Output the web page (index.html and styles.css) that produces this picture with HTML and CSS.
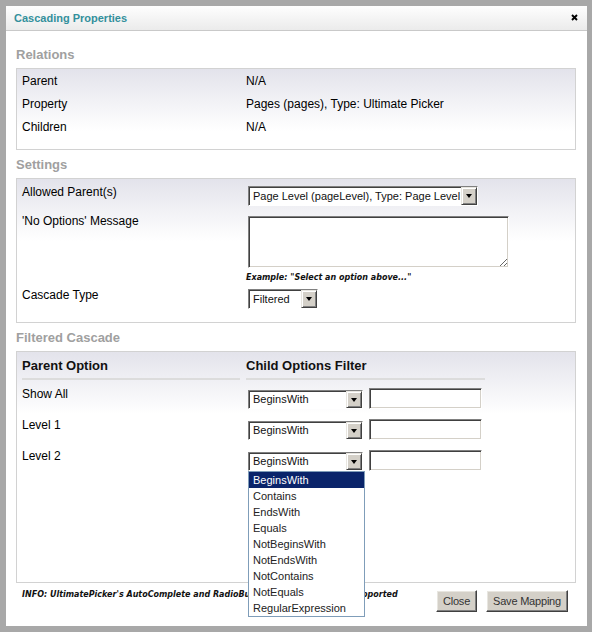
FILE: index.html
```html
<!DOCTYPE html>
<html>
<head>
<meta charset="utf-8">
<title>Cascading Properties</title>
<link rel="stylesheet" href="styles.css">
</head>
<body>
<div class="dialog">
  <div class="titlebar">
    <span class="title">Cascading Properties</span>
    <svg class="close" width="7" height="7" viewBox="0 0 7 7"><path d="M1 1 L6 6 M6 1 L1 6" stroke="#000" stroke-width="1.9" fill="none"/></svg>
  </div>
  <div class="content">
    <h2 class="heading first">Relations</h2>
    <div class="panel panel-rel">
      <div class="rel-row"><div>Parent</div><div>N/A</div></div>
      <div class="rel-row"><div>Property</div><div>Pages (pages), Type: Ultimate Picker</div></div>
      <div class="rel-row"><div>Children</div><div>N/A</div></div>
    </div>

    <h2 class="heading">Settings</h2>
    <div class="panel panel-set">
      <div class="set-row">
        <div class="lbl">Allowed Parent(s)</div>
        <div class="ctl">
          <div class="sel sel-parent"><span class="sel-text">Page Level (pageLevel), Type: Page Level</span><span class="sel-arrow"></span></div>
        </div>
      </div>
      <div class="set-row row-msg">
        <div class="lbl">'No Options' Message</div>
        <div class="ctl ctl-msg">
          <textarea class="ta"></textarea>
          <div class="hint">Example: "Select an option above..."</div>
        </div>
      </div>
      <div class="set-row row-type">
        <div class="lbl">Cascade Type</div>
        <div class="ctl">
          <div class="sel sel-type"><span class="sel-text">Filtered</span><span class="sel-arrow"></span></div>
        </div>
      </div>
    </div>

    <h2 class="heading">Filtered Cascade</h2>
    <div class="panel panel-filter">
      <div class="fhead">
        <div class="col-head col-left">Parent Option</div>
        <div class="col-head col-right">Child Options Filter</div>
      </div>
      <div class="frow first-row">
        <div class="lbl">Show All</div>
        <div class="fctl">
          <div class="sel-wrap"><div class="sel sel-filter"><span class="sel-text">BeginsWith</span><span class="sel-arrow"></span></div></div>
          <input class="txt" type="text">
        </div>
      </div>
      <div class="frow">
        <div class="lbl">Level 1</div>
        <div class="fctl">
          <div class="sel-wrap"><div class="sel sel-filter"><span class="sel-text">BeginsWith</span><span class="sel-arrow"></span></div></div>
          <input class="txt" type="text">
        </div>
      </div>
      <div class="frow">
        <div class="lbl">Level 2</div>
        <div class="fctl">
          <div class="sel-wrap">
            <div class="sel sel-filter"><span class="sel-text">BeginsWith</span><span class="sel-arrow"></span></div>
            <ul class="dropdown">
              <li class="active">BeginsWith</li>
              <li>Contains</li>
              <li>EndsWith</li>
              <li>Equals</li>
              <li>NotBeginsWith</li>
              <li>NotEndsWith</li>
              <li>NotContains</li>
              <li>NotEquals</li>
              <li>RegularExpression</li>
            </ul>
          </div>
          <input class="txt" type="text">
        </div>
      </div>
    </div>

    <div class="footer">
      <div class="info">INFO: UltimatePicker's AutoComplete and RadioButtonList types are not supported</div>
      <div class="buttons">
        <button class="btn btn-close">Close</button>
        <button class="btn btn-save">Save Mapping</button>
      </div>
    </div>
  </div>
</div>
</body>
</html>
```

FILE: styles.css
```css
html, body {
  margin: 0;
}
body {
  background: #a8a8a8;
  padding: 6px 5px 6px 6px;
  font-family: "Liberation Sans", Arial, sans-serif;
  color: #000;
}
.dialog {
  width: 581px;
  height: 620px;
  background: #fff;
  box-sizing: border-box;
}
.titlebar {
  height: 24px;
  border-bottom: 1px solid #c9c9c9;
  background: linear-gradient(#fefefe, #ebebeb);
  display: flex;
  align-items: center;
  justify-content: space-between;
  padding: 0 9px 0 8px;
}
.title {
  font-size: 11px;
  font-weight: bold;
  line-height: 24px;
  color: #33909c;
}
.close {
  display: block;
  margin-top: -1px;
}
.content {
  padding: 0 11px 0 10px;
}
.heading {
  margin: 6px 0;
  padding-top: 1px;
  height: 15px;
  font-size: 13px;
  line-height: 16px;
  font-weight: bold;
  color: #a0a0a0;
}
.heading.first {
  margin-top: 15px;
}
.panel {
  border: 1px solid #d2d2d2;
  background: linear-gradient(#e3e3eb, #fff 62px) no-repeat;
  background-color: #fff;
  padding: 0 5px;
  font-size: 12px;
}
.panel-rel {
  padding-top: 1px;
  padding-bottom: 10px;
}
.rel-row {
  display: grid;
  grid-template-columns: 224px 1fr;
  line-height: 23px;
}
.panel-set {
  padding-top: 4px;
  padding-bottom: 13px;
}
.set-row {
  display: grid;
  grid-template-columns: 224px 1fr;
}
.lbl {
  line-height: 16px;
  padding-top: 1px;
}
.ctl {
  padding-left: 2px;
  padding-top: 3px;
}
.row-msg {
  margin-top: 6px;
}
.ctl-msg {
  padding-top: 4px;
  padding-left: 0;
}
.row-type {
  margin-top: 3px;
}

/* Windows classic select */
.sel {
  display: flex;
  height: 20px;
  box-sizing: border-box;
  border: 1px solid;
  border-color: #808080 #fff #fff #808080;
  box-shadow: inset 1px 1px #404040;
  background: #fff;
  font-size: 11px;
  color: #111;
}
.sel-text {
  flex: 1;
  padding-left: 4px;
  line-height: 18px;
  white-space: nowrap;
  overflow: hidden;
}
.sel-arrow {
  width: 16px;
  flex: none;
  box-sizing: border-box;
  background: #d4d0c8;
  border: 1px solid;
  border-color: #e8e6e0 #404040 #404040 #e8e6e0;
  box-shadow: inset 1px 1px #fff, inset -1px -1px #808080;
  display: flex;
  align-items: center;
  justify-content: center;
}
.sel-arrow::before {
  content: "";
  width: 0;
  height: 0;
  border-style: solid;
  border-width: 4px 3.5px 0 3.5px;
  border-color: #000 transparent transparent transparent;
}
.sel-parent {
  width: 230px;
}
.sel-type {
  width: 70px;
}
.sel-filter {
  width: 115px;
  height: 19px;
}
.sel-filter .sel-text {
  line-height: 17px;
}

.ta {
  display: block;
  margin: 0 0 0 2px;
  width: 261px;
  height: 52px;
  box-sizing: border-box;
  border: 1px solid;
  border-color: #808080 #fff #fff #808080;
  box-shadow: inset 1px 1px #404040, inset -1px -1px #d4d0c8;
  background: #fff;
  padding: 2px;
  font-family: "Liberation Sans", Arial, sans-serif;
  font-size: 11px;
}
.hint, .info {
  font-family: "DejaVu Sans", Verdana, sans-serif;
  font-size: 8px;
  font-weight: bold;
  font-style: italic;
  line-height: 10px;
  color: #111;
}
.hint {
  margin-top: 5px;
}

.panel-filter {
  height: 232px;
  box-sizing: border-box;
  padding-top: 4px;
  position: relative;
}
.fhead {
  display: flex;
  gap: 6px;
}
.col-head {
  font-size: 13px;
  font-weight: bold;
  line-height: 18px;
  padding-top: 1px;
  padding-bottom: 3px;
  border-bottom: 2px solid #dcdcdc;
  color: #111;
}
.col-left {
  width: 218px;
}
.col-right {
  width: 239px;
}
.frow {
  display: grid;
  grid-template-columns: 224px auto;
  height: 31px;
}
.first-row {
  margin-top: 5px;
}
.fctl {
  display: flex;
  align-items: flex-start;
  gap: 6px;
  padding-left: 2px;
}
.sel-wrap {
  position: relative;
  margin-top: 5px;
}
.txt {
  display: block;
  margin: 3px 0 0 0;
  width: 113px;
  height: 21px;
  box-sizing: border-box;
  border: 1px solid;
  border-color: #808080 #fff #fff #808080;
  box-shadow: inset 1px 1px #404040, inset -1px -1px #d4d0c8;
  background: #fff;
  padding: 0 3px;
  outline: none;
}
.dropdown {
  position: absolute;
  z-index: 10;
  left: 0;
  top: 100%;
  margin: 0;
  padding: 0;
  list-style: none;
  width: 117px;
  box-sizing: border-box;
  border: 1px solid #7f9db9;
  background: #fff;
  font-size: 11px;
  color: #222;
}
.dropdown li {
  line-height: 16px;
  height: 16px;
  padding-left: 4px;
  white-space: nowrap;
}
.dropdown li.active {
  background: #0a246a;
  color: #fff;
}

.footer {
  display: flex;
  justify-content: space-between;
  align-items: flex-start;
  margin-top: 7px;
  padding: 0 8px 0 6px;
}
.info {
  white-space: nowrap;
}
.buttons {
  display: flex;
  gap: 9px;
}
.btn {
  margin: 0;
  height: 22px;
  box-sizing: border-box;
  padding: 0;
  background: #d4d0c8;
  border: 1px solid;
  border-color: #fff #404040 #404040 #fff;
  box-shadow: inset -1px -1px #808080, inset 1px 1px #e8e6e0;
  font-family: "Liberation Sans", Arial, sans-serif;
  font-size: 11px;
  letter-spacing: -0.2px;
  color: #333;
}
.btn-close {
  width: 41px;
}
.btn-save {
  width: 82px;
}
```
